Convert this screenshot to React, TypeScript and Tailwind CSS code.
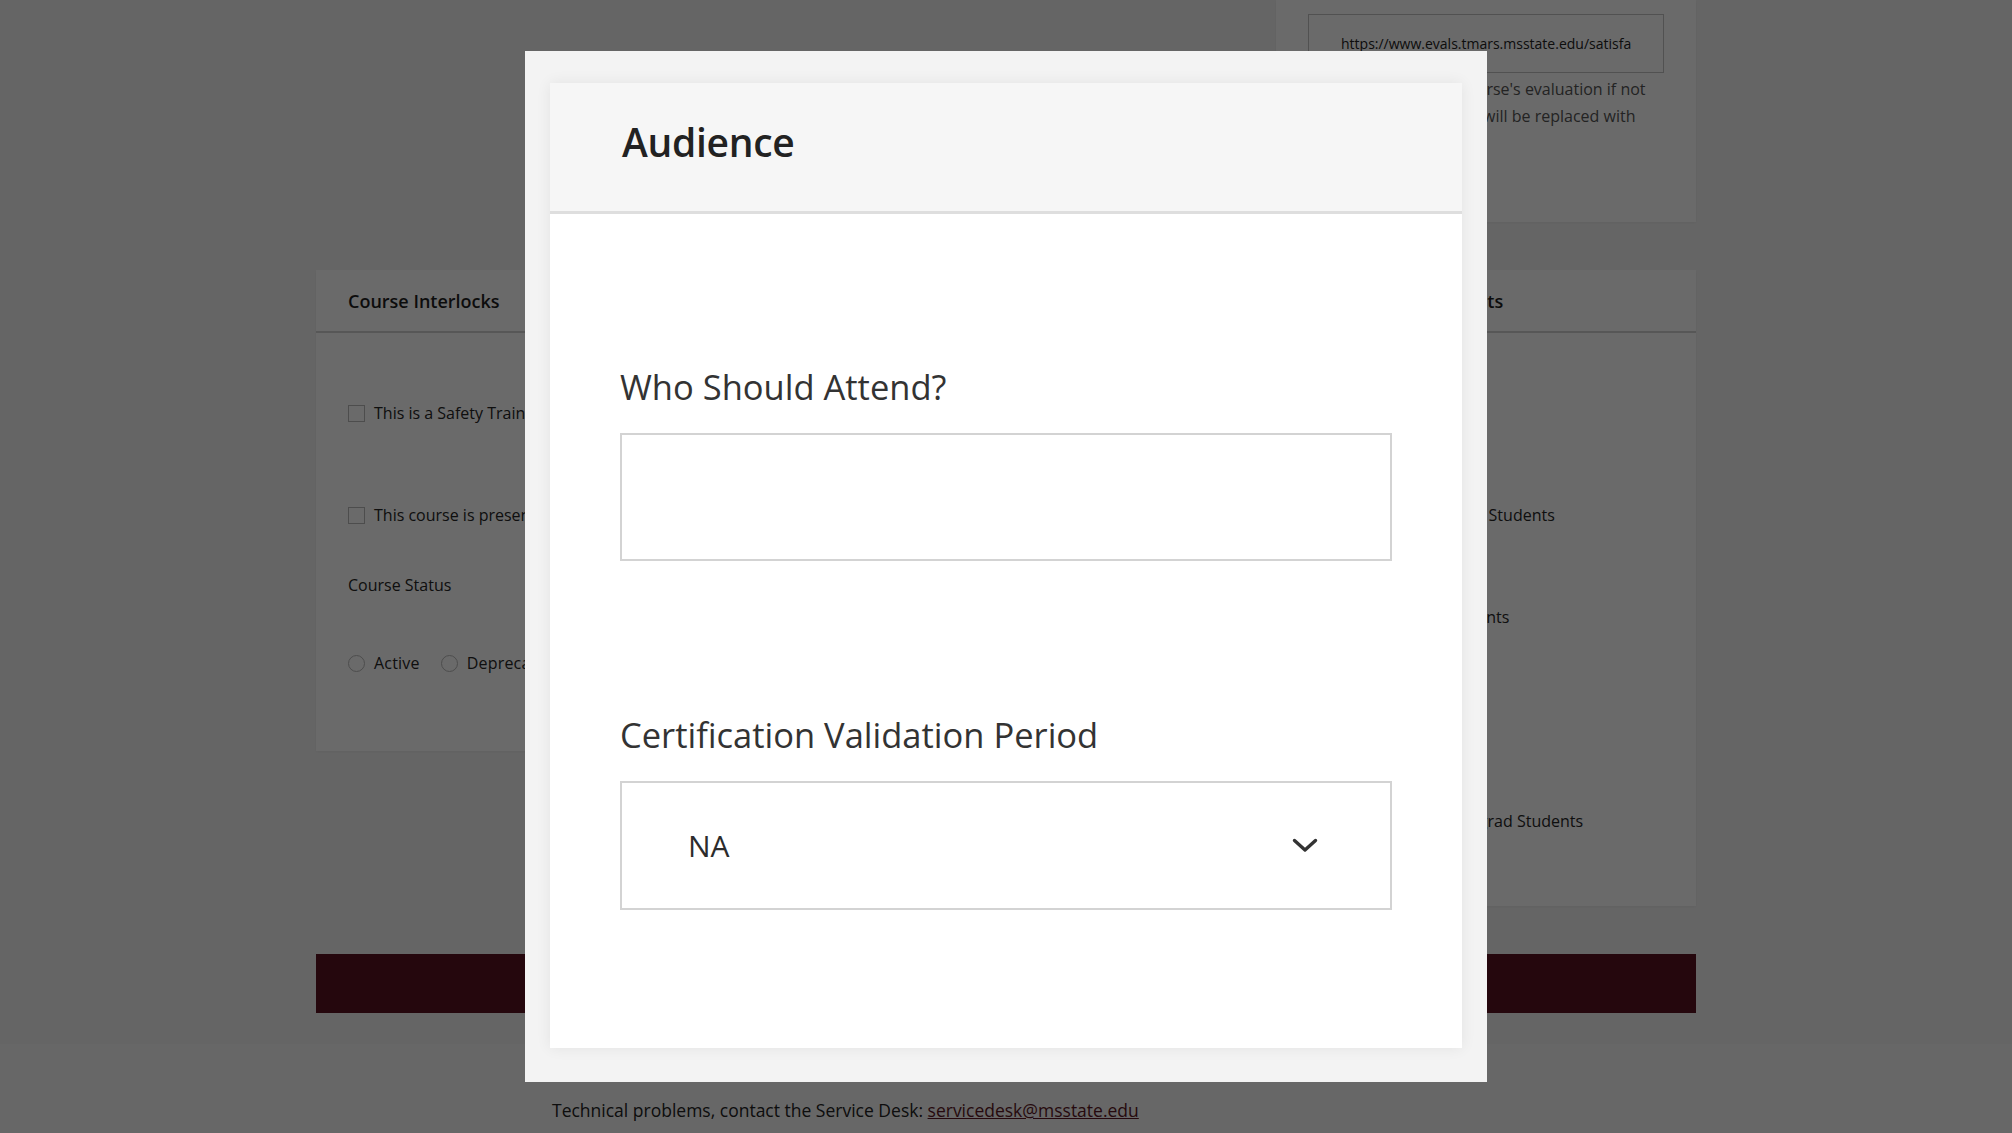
import type { ReactNode } from "react";

const cardClass = "bg-white shadow-[0_1px_3px_rgba(0,0,0,0.06)]";

function Checkbox({ label }: { label: string }) {
  return (
    <label className="flex h-6 items-center gap-[9px] whitespace-nowrap text-base text-[#262626]">
      <span className="h-[17px] w-[17px] shrink-0 border border-[#b9b9b9] bg-white" />
      {label}
    </label>
  );
}

function Radio({ label }: { label: string }) {
  return (
    <label className="flex h-6 items-center gap-[9px] whitespace-nowrap text-base tracking-[0.2px] text-[#262626]">
      <span className="h-[17px] w-[17px] shrink-0 rounded-full border border-[#b9b9b9] bg-white" />
      {label}
    </label>
  );
}

function CardHeader({ children }: { children: ReactNode }) {
  return (
    <div className="flex h-[63px] items-center border-b-2 border-[#d2d2d2] px-8 pt-[1px]">
      <h3 className="whitespace-nowrap text-lg font-semibold text-[#1e1e1e]">{children}</h3>
    </div>
  );
}

function Chevron() {
  return (
    <svg width="26" height="15" viewBox="0 0 26 15" fill="none" aria-hidden>
      <polyline
        points="2.5,2.5 13,12 23.5,2.5"
        stroke="#333"
        strokeWidth="3.4"
        strokeLinecap="round"
        strokeLinejoin="round"
      />
    </svg>
  );
}

function AudienceModal() {
  return (
    <div className="fixed inset-0 z-10 flex items-center justify-center bg-black/[0.585]">
      <div className="h-[1031px] w-[962px] bg-[#f3f3f3] pb-[34px] pl-[25px] pr-[25px] pt-[32px]">
        <div className="flex h-full flex-col bg-white shadow-[0_0_14px_rgba(0,0,0,0.07)]">
          <div className="h-[131px] shrink-0 border-b-[3px] border-[#dedede] bg-[#f6f6f6] pl-[72px] pt-[35px]">
            <h2 className="text-[39px] font-semibold leading-[48px] tracking-[-0.3px] text-[#222]">
              Audience
            </h2>
          </div>
          <div className="flex flex-col px-[70px] pt-[153px]">
            <p className="text-[34.5px] leading-[40px] text-[#333]">
              Who Should Attend?
            </p>
            <div className="mt-[26px] h-[128px] border-2 border-[#d3d3d3] bg-white" />
            <p className="mt-[154px] text-[34.5px] leading-[40px] text-[#333]">
              Certification Validation Period
            </p>
            <div className="mt-[26px] flex h-[129px] items-center justify-between border-2 border-[#d3d3d3] bg-white pl-[66px] pr-[72px]">
              <span className="text-[30px] leading-none text-[#2c2c2c]">NA</span>
              <Chevron />
            </div>
          </div>
        </div>
      </div>
    </div>
  );
}

export default function App() {
  return (
    <div className="relative min-h-screen overflow-hidden bg-[#f4f4f4] font-['Open_Sans',sans-serif]">
      <main className="mx-auto w-[1380px]">
        <div className="flex justify-end">
          <section className={`${cardClass} h-[222px] w-[420px] px-8 pt-[14px]`}>
            <input
              readOnly
              value="https://www.evals.tmars.msstate.edu/satisfaction"
              className="h-[59px] w-[356px] border border-[#c4c4c4] bg-white px-8 text-sm text-[#222] outline-none"
            />
            <p className="mt-[3px] whitespace-nowrap text-base leading-[27px] text-[#555]">
              Enter the link to the course's evaluation if not
              <br />
              provided, a default link will be replaced with
              <br />
              the standard survey.
            </p>
          </section>
        </div>

        <div className="mt-[48px] flex items-start gap-6">
          <section className={`${cardClass} h-[481px] flex-1`}>
            <CardHeader>Course Interlocks</CardHeader>
            <div className="flex flex-col px-8 pt-[68px]">
              <Checkbox label="This is a Safety Training course" />
              <div className="mt-[78px]">
                <Checkbox label="This course is presented by an external vendor" />
              </div>
              <p className="mt-[46px] h-6 text-base leading-6 text-[#262626]">Course Status</p>
              <div className="mt-[54px] flex items-center gap-[21px]">
                <Radio label="Active" />
                <Radio label="Deprecated" />
              </div>
            </div>
          </section>

          <section className={`${cardClass} h-[636px] w-[420px]`}>
            <CardHeader>Learner Requirements</CardHeader>
            <div className="flex flex-col gap-[78px] pl-[23px] pr-8 pt-[68px]">
              <Checkbox label="Staff" />
              <Checkbox label="Faculty and Graduate Students" />
              <Checkbox label="Undergraduate Students" />
              <Checkbox label="Contractors" />
              <Checkbox label="Graduate and Undergrad Students" />
            </div>
          </section>
        </div>

        <div className="mt-[48px] h-[59px] bg-[#5a1320]" />
      </main>

      <footer className="mt-[31px] h-[89px] bg-[#f7f7f7]">
        <div className="mx-auto w-[908px] pt-[53px]">
          <p className="text-[17.5px] leading-[26px] text-[#222]">
            Technical problems, contact the Service Desk:{" "}
            <a href="#" className="text-[#5d1725] underline">
              servicedesk@msstate.edu
            </a>
          </p>
        </div>
      </footer>

      <AudienceModal />
    </div>
  );
}
